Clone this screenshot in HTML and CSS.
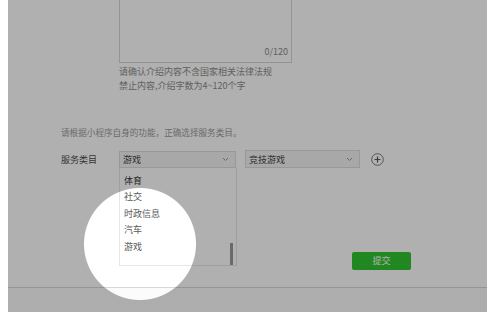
FILE: index.html
```html
<!DOCTYPE html>
<html lang="zh-CN">
<head>
<meta charset="utf-8">
<link rel="stylesheet" href="styles.css">
</head>
<body>
<div class="frame">
  <div class="textarea"><span class="counter">0/120</span></div>
  <div class="help">
    <p>请确认介绍内容不含国家相关法律法规</p>
    <p>禁止内容,介绍字数为4~120个字</p>
  </div>
  <p class="desc">请根据小程序自身的功能，正确选择服务类目。</p>
  <div class="row">
    <span class="label">服务类目</span>
    <div class="select s1">
      <span>游戏</span>
      <svg class="chev" width="7" height="5" viewBox="0 0 7 5"><path d="M1 1l2.5 2.5L6 1" fill="none" stroke="#999" stroke-width="1"/></svg>
      <ul class="menu">
        <li class="dark">体育</li>
        <li>社交</li>
        <li>时政信息</li>
        <li>汽车</li>
        <li>游戏</li>
        <span class="thumb"></span>
      </ul>
    </div>
    <div class="select s2">
      <span>竞技游戏</span>
      <svg class="chev" width="7" height="5" viewBox="0 0 7 5"><path d="M1 1l2.5 2.5L6 1" fill="none" stroke="#999" stroke-width="1"/></svg>
    </div>
    <svg class="plus" width="13" height="13" viewBox="0 0 13 13"><circle cx="6.5" cy="6.5" r="5.8" fill="none" stroke="#7a7a7a" stroke-width="1"/><path d="M6.5 3.6v5.8M3.6 6.5h5.8" stroke="#555" stroke-width="1.2"/></svg>
  </div>
  <div class="actions"><button class="submit">提交</button></div>
  <div class="footer"></div>
  <div class="overlay"></div>
</div>
</body>
</html>
```
FILE: styles.css
```css
* { box-sizing: border-box; }
html, body { margin: 0; padding: 0; }
body {
  width: 499px;
  height: 312px;
  overflow: hidden;
  background: #fff;
  font-family: "Noto Sans CJK SC", "Noto Sans", sans-serif;
  font-size: 9px;
  color: #333;
}
.frame {
  position: relative;
  margin-left: 8px;
  width: 479px;
  height: 312px;
  background: #fff;
  overflow: hidden;
}
.textarea {
  position: relative;
  margin: -40px 0 0 111px;
  width: 173px;
  height: 103px;
  border: 1px solid #d6d6d6;
}
.counter {
  position: absolute;
  right: 3px;
  bottom: 4px;
  color: #8a8a8a;
  font-size: 9px;
  line-height: 12px;
}
.help {
  margin: 2px 0 0 111px;
  color: #8c8c8c;
}
.help p { margin: 0; line-height: 14px; }
.desc {
  margin: 32px 0 0 53px;
  line-height: 14px;
  color: #9a9a9a;
  font-size: 8.6px;
}
.row {
  display: flex;
  align-items: center;
  margin-top: 11px;
  height: 18px;
}
.label {
  width: 58px;
  margin-left: 53px;
  color: #4a4a4a;
}
.select {
  position: relative;
  display: flex;
  align-items: center;
  justify-content: space-between;
  height: 18px;
  padding: 0 6px 0 3px;
  border: 1px solid #dcdcdc;
  background: #f3f3f3;
  color: #444;
}
.s1 { width: 117px; height: 17px; }
.s2 { width: 115px; margin-left: 9px; }
.chev { display: block; }
.plus { margin-left: 11px; display: block; }
.menu {
  position: absolute;
  top: 16px;
  left: -1px;
  width: 118px;
  height: 98px;
  margin: 0;
  padding: 5px 0 0 4px;
  list-style: none;
  background: #fff;
  border: 1px solid #e6e6e6;
  border-top: none;
}
.menu li {
  height: 16.5px;
  line-height: 16.5px;
  color: #5a5a5a;
}
.menu li.dark { color: #333; }
.thumb {
  position: absolute;
  right: 3px;
  top: 75px;
  width: 3px;
  height: 22px;
  background: #9a9a9a;
}
.actions {
  margin-top: 84px;
  padding-left: 344px;
  height: 18px;
}
.submit {
  display: block;
  width: 59px;
  height: 18px;
  padding: 0;
  border: none;
  border-radius: 2px;
  background: #30c530;
  color: #fff;
  font-family: inherit;
  font-size: 9px;
  line-height: 18px;
}
.footer {
  margin-top: 17px;
  border-top: 1px solid #d8d8d8;
  height: 30px;
  background: #fbfbfb;
}
.overlay {
  position: absolute;
  inset: 0;
  background: radial-gradient(circle 57px at 132px 244px, rgba(0,0,0,0) 55.5px, rgba(0,0,0,0.31) 56.5px);
}
```
